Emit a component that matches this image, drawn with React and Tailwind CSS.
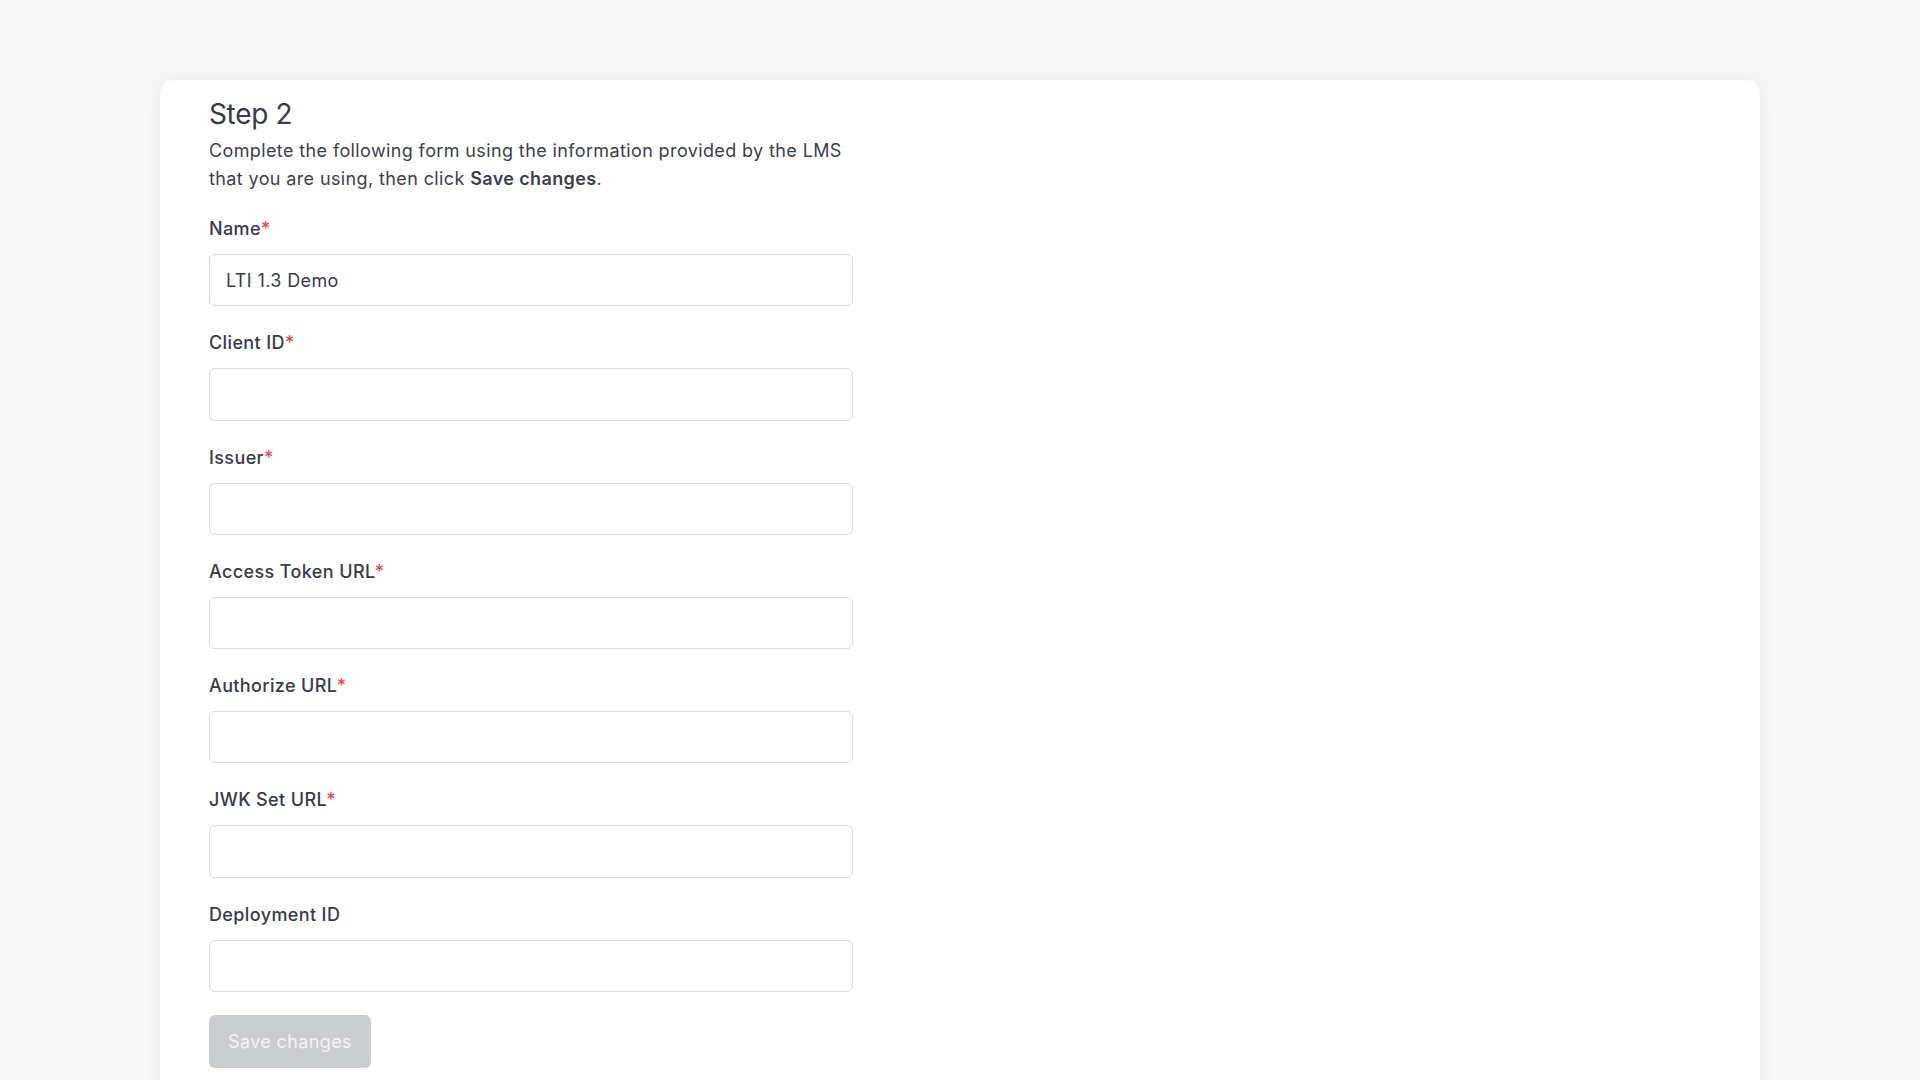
import { useState } from "react";

const fields = [
  { key: "name", label: "Name", required: true },
  { key: "clientId", label: "Client ID", required: true },
  { key: "issuer", label: "Issuer", required: true },
  { key: "accessTokenUrl", label: "Access Token URL", required: true },
  { key: "authorizeUrl", label: "Authorize URL", required: true },
  { key: "jwkSetUrl", label: "JWK Set URL", required: true },
  { key: "deploymentId", label: "Deployment ID", required: false },
];

export default function App() {
  const [values, setValues] = useState({ name: "LTI 1.3 Demo" });

  const update = (key) => (e) => setValues({ ...values, [key]: e.target.value });

  return (
    <div className="min-h-screen bg-[#f7f7f7] pt-[80px] font-['Inter','Liberation_Sans',sans-serif] text-[#374151]">
      <div className="mx-auto w-[1600px] rounded-[14px] bg-white px-[49px] pt-[16px] pb-[40px] shadow-[0_0_24px_rgba(0,0,0,0.05)]">
        <h2 className="text-[28px] leading-[36px] font-normal tracking-[-0.35px] text-[#373b46]">Step 2</h2>
        <p className="mt-[5px] w-[700px] text-[18px] leading-[28px] tracking-[0.38px] text-[#3b3f4a]">
          Complete the following form using the information provided by the LMS
          <br />
          that you are using, then click <strong className="font-semibold">Save changes</strong>.
        </p>

        <form className="mt-[22px] flex w-[644px] flex-col gap-[23px]">
          {fields.map((f) => (
            <div key={f.key} className="flex flex-col">
              <label className="mb-[11px] text-[18px] leading-[28px] font-medium tracking-[0.38px] text-[#373b46]">
                {f.label}
                {f.required && <span className="text-[#dc4a4a]">*</span>}
              </label>
              <input
                type="text"
                value={values[f.key] || ""}
                onChange={update(f.key)}
                className="h-[52.3px] w-full rounded-[6px] border-[1.5px] border-[#d9d9dc] bg-white px-4 text-[18px] tracking-[0.38px] text-[#373b46] outline-none"
              />
            </div>
          ))}
          <div>
            <button
              type="button"
              disabled
              className="h-[53px] rounded-[6px] bg-[#cbccd0] px-[19px] text-[18px] tracking-[0.38px] text-[#f4f4f5]"
            >
              Save changes
            </button>
          </div>
        </form>
      </div>
    </div>
  );
}
